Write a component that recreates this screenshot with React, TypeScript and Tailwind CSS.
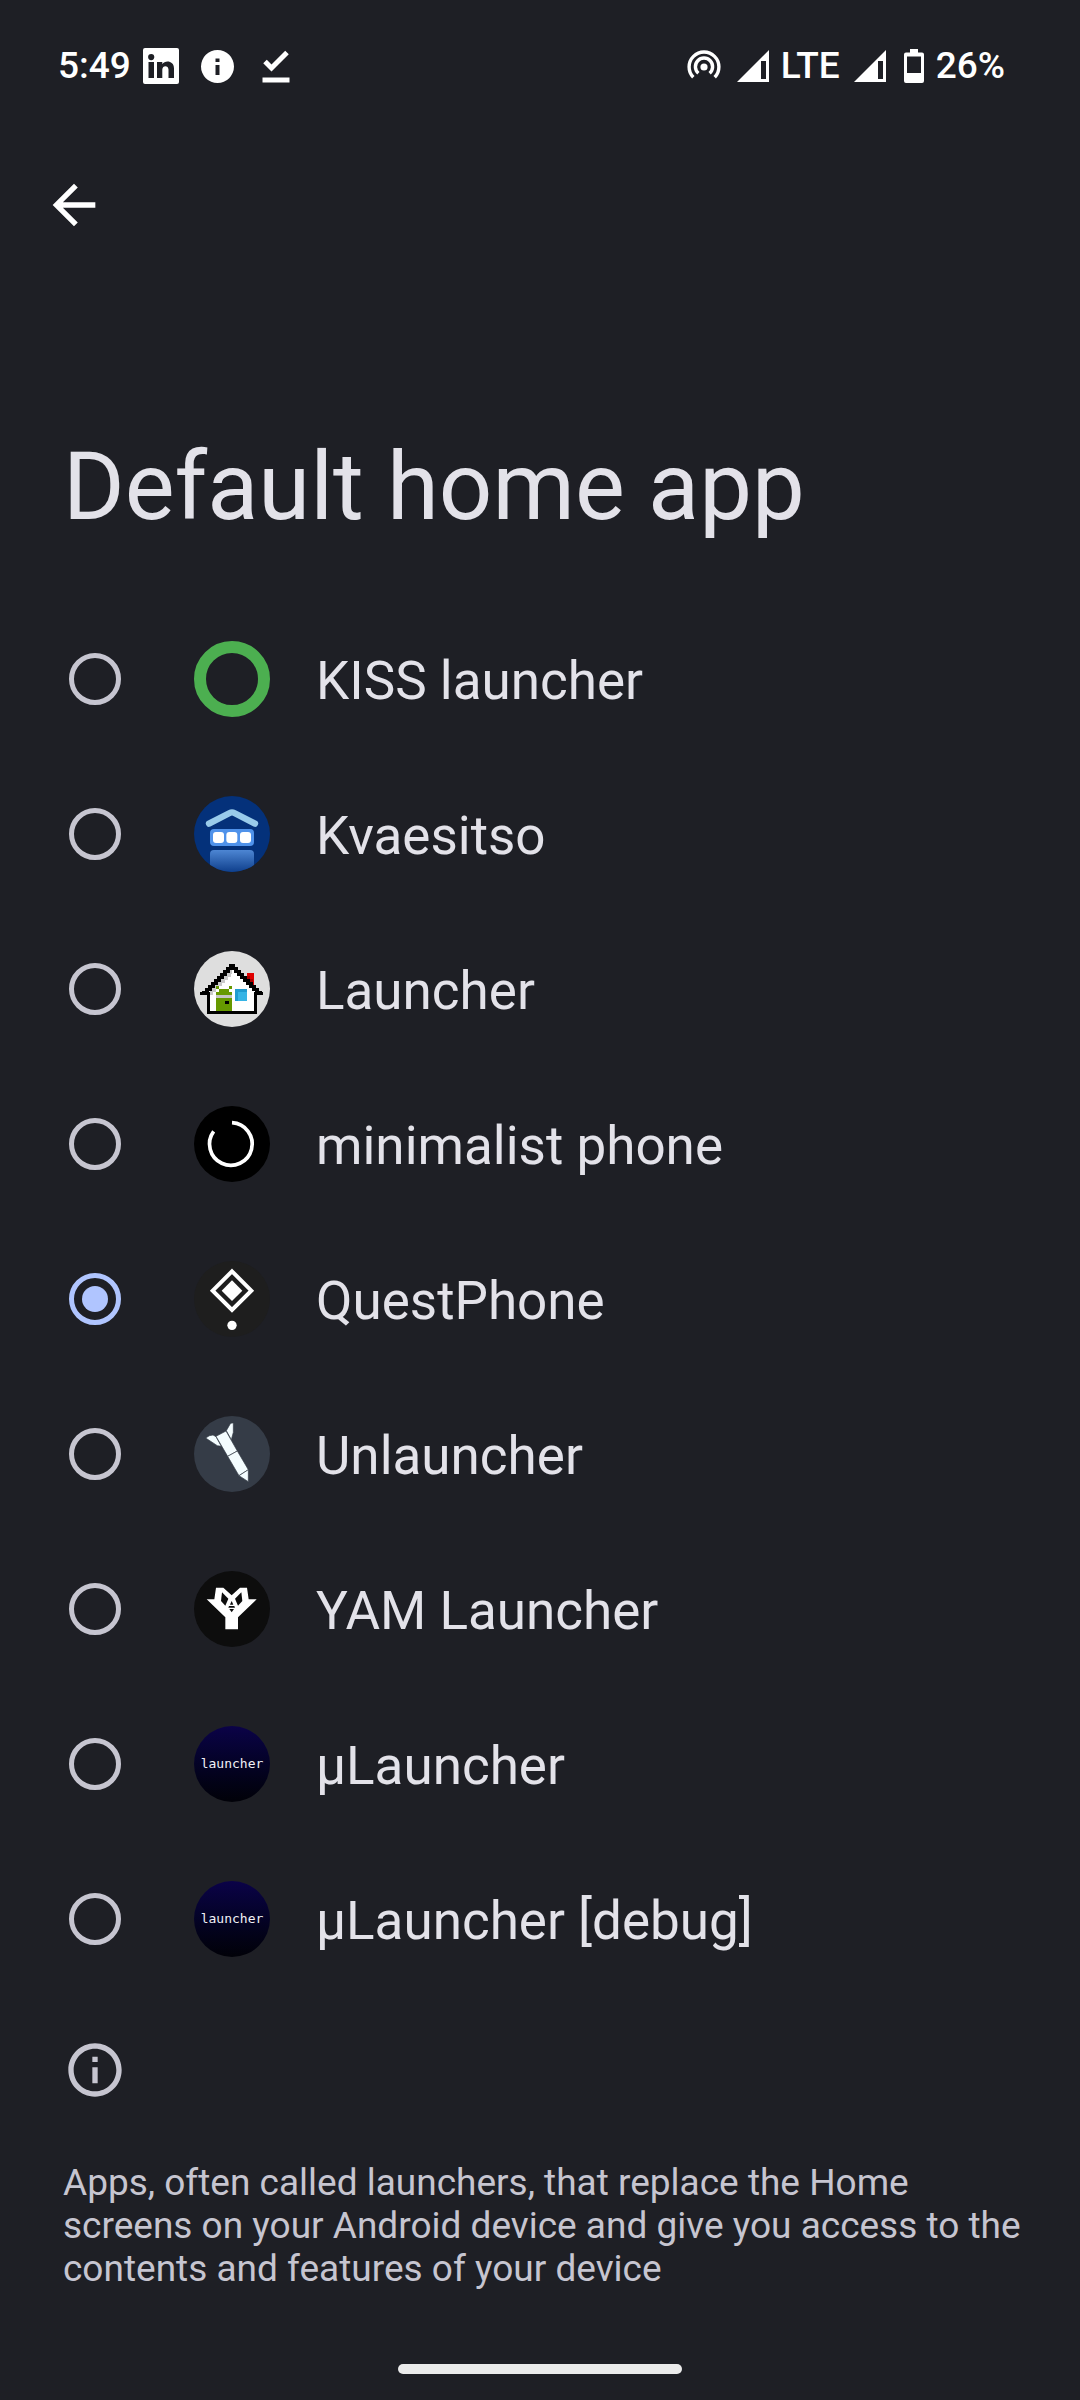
import { useState, type ReactNode } from 'react';

const disc = 'size-19 shrink-0 rounded-full';

function KissIcon() {
  return <span className={`${disc} border-12 border-[#4caf50]`} />;
}

function KvaesitsoIcon() {
  return (
    <svg viewBox="42 48 228 228" className={`${disc} bg-[#04317a]`} aria-hidden="true">
      <defs>
        <linearGradient id="kv-base" x1="0" y1="0" x2="0" y2="1">
          <stop offset="0" stopColor="#4d86d3" />
          <stop offset="1" stopColor="#0b3b88" />
        </linearGradient>
      </defs>
      <path d="M87 131 L149 99 Q156 95 163 99 L225 131" fill="none" stroke="#99cbea" strokeWidth="19" strokeLinecap="round" />
      <rect x="90" y="147" width="132" height="51" rx="12" fill="#4f92ea" />
      <rect x="99" y="156" width="33" height="33" rx="9" fill="#fff" />
      <rect x="139" y="156" width="33" height="33" rx="9" fill="#fff" />
      <rect x="180" y="156" width="33" height="33" rx="9" fill="#fff" />
      <rect x="90" y="210" width="132" height="70" rx="12" fill="url(#kv-base)" />
    </svg>
  );
}

const roofSteps = [1, 2, 3, 4, 5, 6, 7, 8, 9];

function PixelHouseIcon() {
  return (
    <svg viewBox="42 48 228 228" className={`${disc} bg-[#dedede]`} shapeRendering="crispEdges" aria-hidden="true">
      <rect x="202" y="114" width="20" height="48" fill="#e00000" />
      <path d="M202 123 h9 v9 h9 v30 h-18 z" fill="#a80000" />
      <path d="M156 96 L228 170 V232 H86 V170 Z" fill="#fff" />
      <path d="M156 96 L84 166 H90 V180 H100 V171 H109 V162 H118 V153 H127 V144 H136 V135 H145 V126 H154 Z" fill="#c9c9c9" />
      <rect x="147" y="87" width="18" height="18" />
      {roofSteps.map((i) => (
        <g key={i}>
          <rect x={147 - 9 * i} y={87 + 9 * i} width="21" height="9" />
          <rect x={144 + 9 * i} y={87 + 9 * i} width="21" height="9" />
        </g>
      ))}
      <path d="M60 171 H90 V228 H222 V171 H249 V180 H231 V237 H81 V180 H60 Z" />
      <path d="M108 153 h9 v9 h30 v-9 h9 v9 h-1 v66 h-47 v-66 z" fill="#669900" />
      <rect x="108" y="162" width="9" height="9" fill="#fff" />
      <rect x="147" y="162" width="9" height="9" fill="#fff" />
      <rect x="108" y="180" width="47" height="9" fill="#c4c4c4" />
      <rect x="136" y="198" width="10" height="10" />
      <rect x="165" y="162" width="36" height="36" fill="#36b4e5" />
      <path d="M165 162 h36 v9 h-27 v27 h-9 z" fill="#1f9bd0" />
    </svg>
  );
}

function MinimalistIcon() {
  return (
    <svg viewBox="42 48 228 228" className={`${disc} bg-black`} aria-hidden="true">
      <path d="M156 98 A64 64 0 1 1 101 124" fill="none" stroke="#fff" strokeWidth="11" />
    </svg>
  );
}

function QuestIcon() {
  return (
    <svg viewBox="431 48 228 228" className={`${disc} bg-[#1e1e1e]`} aria-hidden="true">
      <path d="M545 79 L603 137 L545 195 L487 137 Z" fill="none" stroke="#fff" strokeWidth="12" />
      <path d="M545 106 L576 137 L545 168 L514 137 Z" fill="#fff" />
      <circle cx="545" cy="241" r="14" fill="#fff" />
    </svg>
  );
}

function RocketIcon() {
  return (
    <svg viewBox="42 48 228 228" className={`${disc} bg-[#353c47]`} aria-hidden="true">
      <g fill="#f4fdff" stroke="#353c47" strokeWidth="2" strokeLinejoin="round">
        <path d="M77 114 Q88 105 99 105 L108 110 L124 139 L112 137 Z" />
        <path d="M139 92 L151 71 Q155 68 160 69 L160 97 L154 119 Z" />
        <path d="M108 109 L138 93 L172 153 L143 169 Z" />
        <path d="M143 169 L172 153 L205 209 L177 227 Z" />
        <path d="M177 227 L205 209 L205 245 Z" />
      </g>
    </svg>
  );
}

function YamIcon() {
  return (
    <svg viewBox="42 48 228 228" className={`${disc} bg-[#0d0d0d]`} aria-hidden="true">
      <path d="M80 133 H103 L108 98 H130 L155 121 L180 98 H201 L206 133 H230 L174 187 V223 H136 V187 Z" fill="#fff" />
      <g fill="#0d0d0d">
        <path d="M126 112 L145 131 L136 152 L123 138 Z" />
        <path d="M184 112 L165 131 L174 152 L187 138 Z" />
        <path d="M155 138 L160 149 H150 Z" />
        <path d="M147 153 H163 L165 158 H145 Z" />
        <path d="M148 162 H162 L155 172 Z" />
      </g>
    </svg>
  );
}

function MuIcon() {
  return (
    <span
      className={`${disc} flex items-center justify-center bg-linear-to-b from-[#0b0248] to-[#010108] font-['DejaVu_Sans_Mono',monospace] text-[13px] leading-4 text-[#f0f0f6]`}
      aria-hidden="true"
    >
      launcher
    </span>
  );
}

const apps: { name: string; icon: ReactNode }[] = [
  { name: 'KISS launcher', icon: <KissIcon /> },
  { name: 'Kvaesitso', icon: <KvaesitsoIcon /> },
  { name: 'Launcher', icon: <PixelHouseIcon /> },
  { name: 'minimalist phone', icon: <MinimalistIcon /> },
  { name: 'QuestPhone', icon: <QuestIcon /> },
  { name: 'Unlauncher', icon: <RocketIcon /> },
  { name: 'YAM Launcher', icon: <YamIcon /> },
  { name: 'µLauncher', icon: <MuIcon /> },
  { name: 'µLauncher [debug]', icon: <MuIcon /> },
];

function Signal() {
  return (
    <svg viewBox="0 0 32 32" className="size-8" aria-hidden="true">
      <path fillRule="evenodd" d="M0 32 L32 0 V32 Z M24 11 V29 H29 V11 Z" fill="#fff" />
    </svg>
  );
}

function StatusBar() {
  return (
    <header className="flex h-33 items-center justify-between pr-[75px] pl-[58px] text-[37px] leading-11 font-medium text-white">
      <div className="flex items-center">
        <span>5:49</span>
        <svg viewBox="0 0 36 36" className="ml-3 size-9" aria-hidden="true">
          <path
            fillRule="evenodd"
            fill="#fff"
            d="M2 0 H34 Q36 0 36 2 V34 Q36 36 34 36 H2 Q0 36 0 34 V2 Q0 0 2 0 Z M5.500 14 V30 H11 V14 Z M8.200 6 A3.100 3.100 0 1 0 8.200 12.200 A3.100 3.100 0 1 0 8.200 6 Z M14 14 V30 H19.300 V21.500 C19.300 17 25.500 17 25.500 21.500 V30 H31 V20.500 C31 12.500 22 12 19.300 16.200 V14 Z"
          />
        </svg>
        <svg viewBox="0 0 33 33" className="ml-[22px] size-[33px]" aria-hidden="true">
          <path
            fillRule="evenodd"
            fill="#fff"
            d="M16.500 0 A16.500 16.500 0 1 0 16.500 33 A16.500 16.500 0 1 0 16.500 0 Z M14.500 8.500 H18.500 V12 H14.500 Z M14.500 15 H18.500 V25 H14.500 Z"
          />
        </svg>
        <svg viewBox="0 0 28 33" className="ml-7 h-[33px] w-7" aria-hidden="true">
          <path d="M3 11.500 L9.500 18 L25 2.500" fill="none" stroke="#fff" strokeWidth="5" />
          <rect x="0.500" y="27.500" width="27" height="5" fill="#fff" />
        </svg>
      </div>
      <div className="flex items-center">
        <svg viewBox="0 0 34 34" className="size-[34px]" fill="none" stroke="#fff" strokeWidth="3.400" aria-hidden="true">
          <circle cx="17" cy="18" r="3.600" fill="#fff" stroke="none" />
          <path d="M11.400 24.200 A8.600 8.600 0 1 1 22.600 24.200" />
          <path d="M6.300 28.300 A14.900 14.900 0 1 1 27.700 28.300" />
        </svg>
        <span className="ml-4 flex">
          <Signal />
        </span>
        <span className="ml-3">LTE</span>
        <span className="ml-[14px] flex">
          <Signal />
        </span>
        <svg viewBox="0 0 20 34" className="ml-[18px] h-[34px] w-5" aria-hidden="true">
          <path
            fillRule="evenodd"
            fill="#fff"
            d="M6 0 H14 V3.500 H18 Q20 3.500 20 5.500 V32 Q20 34 18 34 H2 Q0 34 0 32 V5.500 Q0 3.500 2 3.500 H6 Z M3 7.500 V24 H17 V7.500 Z"
          />
        </svg>
        <span className="ml-3">26%</span>
      </div>
    </header>
  );
}

export default function App() {
  const [selected, setSelected] = useState('QuestPhone');

  return (
    <div className="flex min-h-screen flex-col bg-[#1e1f25] font-[Roboto,sans-serif] text-[#e3e2e9]">
      <StatusBar />
      <nav className="px-[42px] pt-[41px]">
        <button type="button" aria-label="Back" className="block size-16 text-white">
          <svg viewBox="0 0 24 24" className="size-full" fill="currentColor" aria-hidden="true">
            <path d="M20 11H7.830l5.590-5.590L12 4l-8 8 8 8 1.410-1.410L7.830 13H20v-2z" />
          </svg>
        </button>
      </nav>
      <main className="flex flex-1 flex-col">
        <h1 className="mt-[194px] px-[63px] text-[94px] leading-28">Default home app</h1>
        <div role="radiogroup" aria-label="Default home app" className="mt-[58px]">
          {apps.map((app) => (
            <label key={app.name} className="flex h-[155px] cursor-pointer items-center pr-16 pl-[69px]">
              <input
                type="radio"
                name="home-app"
                value={app.name}
                checked={selected === app.name}
                onChange={() => setSelected(app.name)}
                className="grid size-[52px] shrink-0 cursor-pointer appearance-none place-items-center rounded-full border-5 border-[#c6c5d0] checked:border-[#b0c5ff] checked:before:size-[26px] checked:before:rounded-full checked:before:bg-[#b0c5ff]"
              />
              <span className="ml-[73px] flex">{app.icon}</span>
              <span className="ml-[46px] pt-1 text-[53px] leading-16">{app.name}</span>
            </label>
          ))}
        </div>
        <section className="pr-12 pl-[63px] text-[#c6c5d0]">
          <svg viewBox="0 0 24 24" className="mt-[42px] size-16" fill="currentColor" aria-hidden="true">
            <path d="M11 7h2v2h-2zm0 4h2v6h-2zm1-9C6.480 2 2 6.480 2 12s4.480 10 10 10 10-4.480 10-10S17.520 2 12 2zm0 18c-4.410 0-8-3.590-8-8s3.590-8 8-8 8 3.590 8 8-3.590 8-8 8z" />
          </svg>
          <p className="mt-[59px] text-[37px] leading-[43px]">
            Apps, often called launchers, that replace the Home screens on your Android device and give you access to the
            contents and features of your device
          </p>
        </section>
      </main>
      <footer className="flex justify-center pt-12 pb-[26px]">
        <span className="h-2.5 w-[284px] rounded-full bg-[#ebebeb]" />
      </footer>
    </div>
  );
}
